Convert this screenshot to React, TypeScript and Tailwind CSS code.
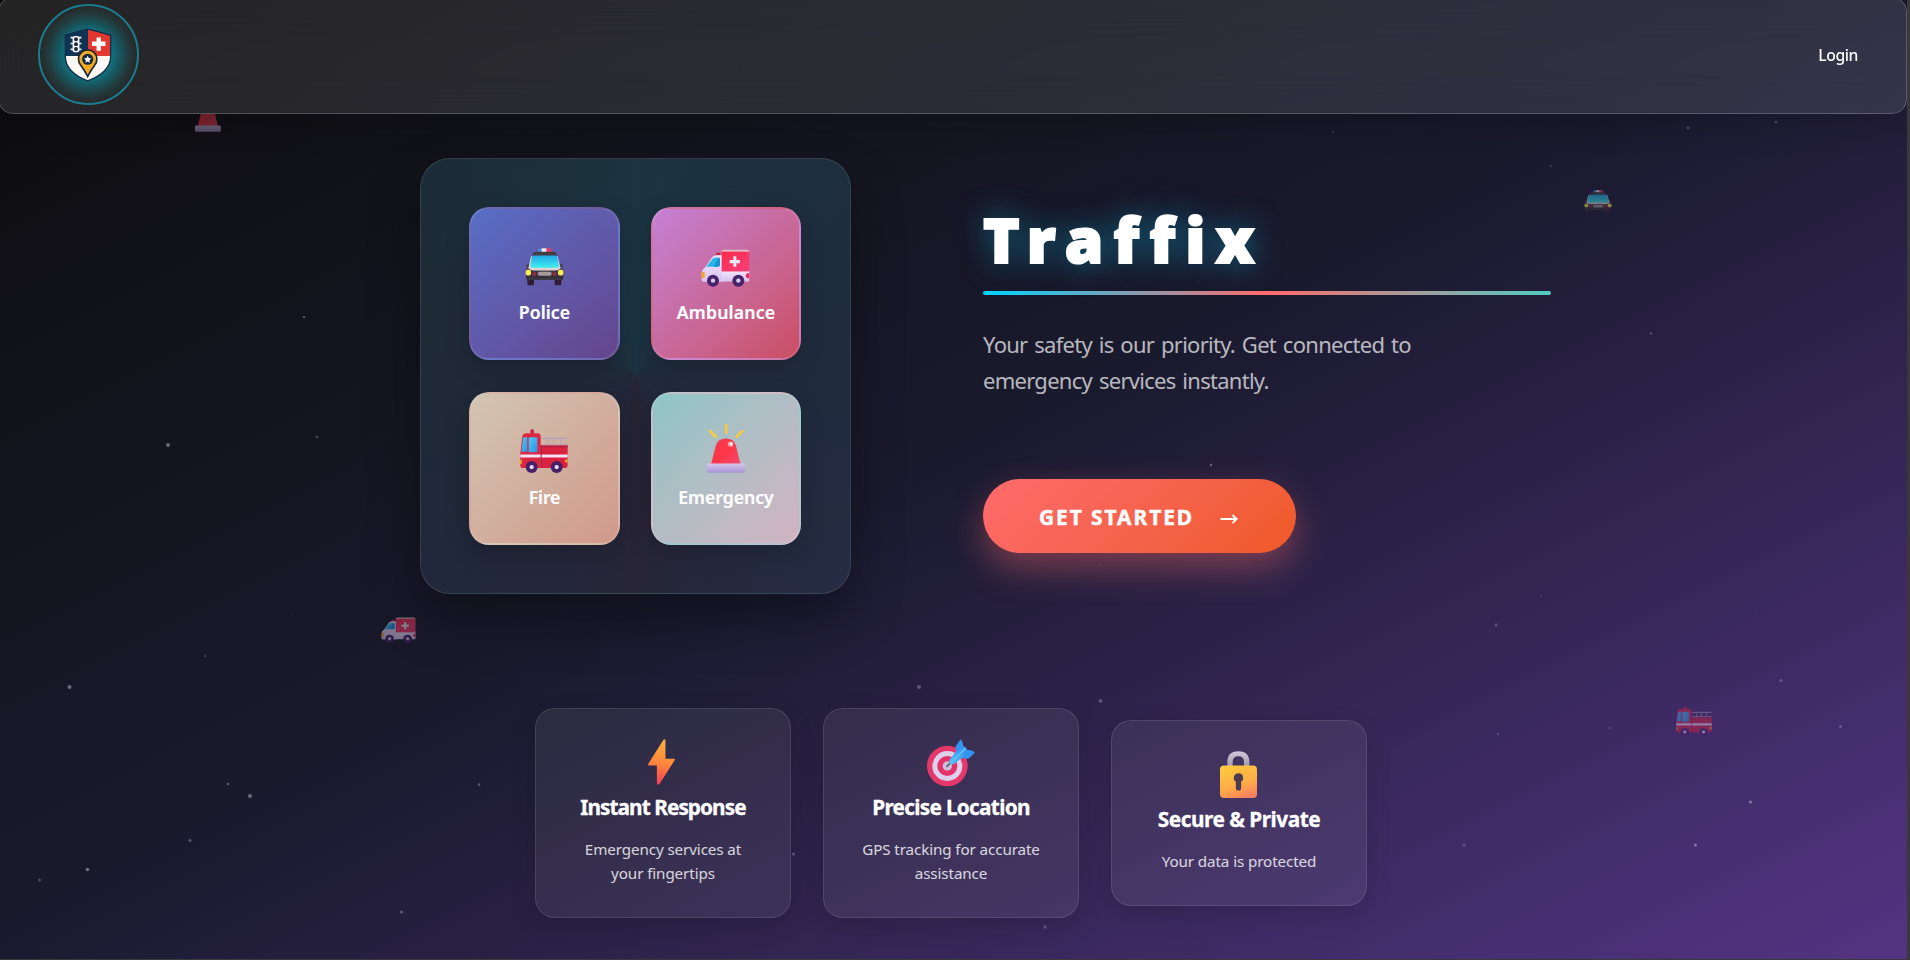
import React from "react";

type IconProps = { className?: string };

function PoliceCar({ className }: IconProps) {
  return (
    <svg viewBox="345 310 117 115" className={className} preserveAspectRatio="none">
      <defs>
        <linearGradient id="pc-glass" x1="0" y1="0" x2="0" y2="1">
          <stop offset="0" stopColor="#22a9e8" />
          <stop offset="1" stopColor="#3ff0ee" />
        </linearGradient>
        <linearGradient id="pc-body" x1="0" y1="0" x2="0" y2="1">
          <stop offset="0" stopColor="#4a4247" />
          <stop offset="1" stopColor="#2d2a33" />
        </linearGradient>
      </defs>
      <rect x="384" y="312" width="20" height="11" rx="4" fill="#4b8fd6" />
      <rect x="406" y="311" width="18" height="12" rx="4" fill="#f23a6a" />
      <rect x="395" y="311" width="14" height="12" fill="#f1eef4" />
      <path d="M368 328q2-7 10-7h52q8 0 10 7l2 8h-76z" fill="#433c43" />
      <rect x="352" y="398" width="20" height="25" rx="5" fill="#311c33" />
      <rect x="434" y="398" width="20" height="25" rx="5" fill="#311c33" />
      <path d="M350 360l10-3 3 12h-14zM458 360l-10-3-3 12h14z" fill="#4a4247" />
      <path d="M348 374q3-7 12-6l86-0q11 0 14 6v27q0 6-7 6h-98q-7 0-7-6z" fill="url(#pc-body)" />
      <path d="M363 335h80l9 36q-5 7-17 7h-63q-12 0-17-7z" fill="#ddd3d2" />
      <path d="M366 335q2-2 5-2h66q3 0 5 2l5 28q0 7-6 7h-74q-6 0-6-7z" fill="url(#pc-glass)" />
      <rect x="383" y="382" width="42" height="12" rx="6" fill="#a49a9c" />
      <circle cx="373" cy="389" r="6" fill="#9b2450" />
      <circle cx="434" cy="389" r="6" fill="#9b2450" />
      <rect x="347" y="376" width="16" height="17" rx="6" fill="#f7ee57" />
      <rect x="444" y="376" width="16" height="17" rx="6" fill="#f7ee57" />
      <rect x="352" y="402" width="102" height="3" rx="1.500" fill="#4c4552" />
    </svg>
  );
}

function AmbulanceIcon({ className }: IconProps) {
  return (
    <svg viewBox="874 312 147 115" className={className} preserveAspectRatio="none">
      <defs>
        <linearGradient id="am-body" x1="0" y1="0" x2="0" y2="1">
          <stop offset="0" stopColor="#f3e9fb" />
          <stop offset="1" stopColor="#d9c2f2" />
        </linearGradient>
        <linearGradient id="am-box" x1="0" y1="0" x2="1" y2="1">
          <stop offset="0" stopColor="#ff2b4b" />
          <stop offset="1" stopColor="#f5407a" />
        </linearGradient>
      </defs>
      <path d="M936 318q2-4 8-4h67q7 0 8 6v4h-83z" fill="#ddbfc4" />
      <rect x="919" y="323" width="13" height="9" rx="4" fill="#c22a4b" />
      <path d="M937 331h-17q-9 1-14 8l-19 28q-11 6-11 20v18q0 6 6 6h57z" fill="url(#am-body)" />
      <rect x="935" y="375" width="84" height="35" rx="3" fill="url(#am-body)" />
      <rect x="936" y="320" width="83" height="60" fill="url(#am-box)" />
      <path d="M890 366l18-24q4-4 10-4h9q4 0 4 4v17q0 6-6 7z" fill="#29b6ea" />
      <path d="M912 366l13-27 6 3v17q0 6-6 7z" fill="#1793d8" />
      <rect x="876" y="381" width="9" height="19" rx="4" fill="#f6a51c" />
      <path d="M1019 385q-11 0-11 8t11 8z" fill="#ee2a5a" />
      <path d="M971 334h9v11h11v10h-11v11h-9v-11h-11v-10h11z" fill="#f3e6ef" />
      <circle cx="910" cy="408" r="18" fill="#46236a" />
      <circle cx="986" cy="408" r="18" fill="#46236a" />
      <circle cx="910" cy="408" r="6.500" fill="#d9d0ee" />
      <circle cx="986" cy="408" r="6.500" fill="#d9d0ee" />
    </svg>
  );
}

function FireTruck({ className }: IconProps) {
  return (
    <svg viewBox="331 176 144 133" className={className} preserveAspectRatio="none">
      <defs>
        <linearGradient id="ft-glass" x1="0" y1="0" x2="1" y2="1">
          <stop offset="0" stopColor="#52c8f5" />
          <stop offset="1" stopColor="#2a94e8" />
        </linearGradient>
      </defs>
      <rect x="362" y="177" width="11" height="14" rx="5" fill="#cf1f55" />
      <g stroke="#b3a3bd" strokeWidth="4" fill="none">
        <path d="M393 204h81M393 224h81" />
        <path d="M414 204v20M433 204v20M453 204v20" strokeWidth="3" />
      </g>
      <path d="M350 189h34q9 0 9 10v95h-54q-7 0-7-8v-36l5-46q1-15 13-15z" fill="#dc2742" />
      <path d="M393 226h81v58q0 10-8 10h-73z" fill="#d92340" />
      <path d="M393 226h81v6h-81z" fill="#b92445" />
      <path d="M340 204q1-3 6-3h7v44h-18z" fill="url(#ft-glass)" />
      <rect x="357" y="201" width="26" height="45" rx="3" fill="url(#ft-glass)" />
      <path d="M332 253h142v9H332z" fill="#f3e3f6" />
      <path d="M393 226h3v68h-3z" fill="#a9173a" />
      <rect x="331" y="269" width="6" height="13" rx="3" fill="#f9a11e" />
      <path d="M474 267q-9 1-9 6t9 6z" fill="#f7a427" />
      <circle cx="366" cy="291" r="18" fill="#47206a" />
      <circle cx="441" cy="291" r="18" fill="#47206a" />
      <circle cx="366" cy="291" r="6.500" fill="#e6ddf2" />
      <circle cx="441" cy="291" r="6.500" fill="#e6ddf2" />
    </svg>
  );
}

function Siren({ className }: IconProps) {
  return (
    <svg viewBox="890 161 113 149" className={className} preserveAspectRatio="none">
      <defs>
        <linearGradient id="si-dome" x1="0" y1="0" x2="1" y2="1">
          <stop offset="0" stopColor="#ef3d50" />
          <stop offset="0.500" stopColor="#ff3548" />
          <stop offset="1" stopColor="#ee4c6c" />
        </linearGradient>
        <linearGradient id="si-base" x1="0" y1="0" x2="0" y2="1">
          <stop offset="0" stopColor="#d9c8ef" />
          <stop offset="1" stopColor="#a893d3" />
        </linearGradient>
      </defs>
      <g strokeWidth="8" strokeLinecap="round" stroke="#f8cc3e">
        <path d="M899 185l17 17M947 167v23M995 185l-17 17" />
      </g>
      <path d="M902 284l14-55q7-22 30-22t30 22l14 55z" fill="url(#si-dome)" />
      <circle cx="960" cy="224" r="8" fill="#ffa7ae" />
      <circle cx="962" cy="223" r="4" fill="#fff" />
      <rect x="890" y="282" width="112" height="27" rx="4" fill="url(#si-base)" />
    </svg>
  );
}

function Bolt({ className }: IconProps) {
  return (
    <svg viewBox="384 147 82 139" className={className} preserveAspectRatio="none">
      <defs>
        <linearGradient id="bolt" x1="0.500" y1="0" x2="0.400" y2="1">
          <stop offset="0" stopColor="#fbb13c" />
          <stop offset="0.500" stopColor="#ff8a3d" />
          <stop offset="1" stopColor="#f23c55" />
        </linearGradient>
      </defs>
      <path
        d="M431 149q6-3 6 3v55h26q4 0 2 4l-46 72q-8 5-8-2v-54h-25q-3-1-1-5z"
        fill="url(#bolt)"
      />
    </svg>
  );
}

function Target({ className }: IconProps) {
  return (
    <svg viewBox="351 145 144 144" className={className}>
      <defs>
        <linearGradient id="dart" x1="0" y1="1" x2="1" y2="0">
          <stop offset="0" stopColor="#55c3fb" />
          <stop offset="1" stopColor="#2f86e6" />
        </linearGradient>
      </defs>
      <circle cx="412" cy="226" r="61" fill="#e5386a" />
      <circle cx="412" cy="226" r="45" fill="#ddd0ea" />
      <circle cx="412" cy="226" r="30" fill="#e5316a" />
      <circle cx="412" cy="226" r="14" fill="#c9bfd8" />
      <path d="M411 227l20-20" stroke="#6b6480" strokeWidth="6" strokeLinecap="round" />
      <path d="M419 207l20-27 18-18 20 20-18 18-26 19q-19 8-14-12z" fill="url(#dart)" />
      <path d="M440 184q-6-14-1-20l12-17q6 0 8 14l0 8zM457 201q14 6 21 1l16-15q1-5-14-9l-9 1z" fill="#3393f0" />
      <path d="M428 211l38-38" stroke="#5cc4fb" strokeWidth="5" strokeLinecap="round" />
    </svg>
  );
}

function Padlock({ className }: IconProps) {
  return (
    <svg viewBox="360 152 111 142" className={className} preserveAspectRatio="none">
      <defs>
        <linearGradient id="lock" x1="0.300" y1="0" x2="0.700" y2="1">
          <stop offset="0" stopColor="#ffc83f" />
          <stop offset="0.600" stopColor="#ffab47" />
          <stop offset="1" stopColor="#f6805f" />
        </linearGradient>
        <linearGradient id="shackle" x1="0" y1="0" x2="0" y2="1">
          <stop offset="0" stopColor="#cfc9d8" />
          <stop offset="1" stopColor="#9f98ae" />
        </linearGradient>
      </defs>
      <path d="M382 200v-14q0-33 33-33t33 33v14h-16v-14q0-18-17-18t-17 18v14z" fill="url(#shackle)" />
      <rect x="360" y="196" width="111" height="98" rx="12" fill="url(#lock)" />
      <path d="M415.500 219a14 14 0 0 1 8 25.500v19a8 8 0 0 1-16 0v-19a14 14 0 0 1 8-25.500z" fill="#4b3a52" />
    </svg>
  );
}

function Shield({ className }: IconProps) {
  return (
    <svg viewBox="190 86 146 164" className={className}>
      <defs>
        <clipPath id="shield-clip">
          <path d="M262 90Q297 97 331 108v64q0 48-69 75-67-27-67-75v-64Q228 97 262 90z" />
        </clipPath>
      </defs>
      <g clipPath="url(#shield-clip)">
        <rect x="190" y="86" width="73" height="86" fill="#0f3354" />
        <rect x="263" y="86" width="73" height="86" fill="#e2382f" />
        <rect x="190" y="171" width="146" height="80" fill="#fbf8f4" />
      </g>
      <path
        d="M262 89Q297 96 332 108v64q0 48-70 75-68-27-68-75v-64Q228 96 262 89z"
        fill="none"
        stroke="#122c48"
        strokeWidth="4"
      />
      <path d="M289 115h13v12h14v14h-14v14h-13v-14h-14v-14h14z" fill="#fff" />
      <path d="M210 115h33M210 133h33M210 151h33" stroke="#f2f4f6" strokeWidth="5" />
      <rect x="216" y="110" width="21" height="50" rx="8" fill="#f2f4f6" />
      <circle cx="226.500" cy="120" r="6" fill="#1b2836" />
      <circle cx="226.500" cy="135" r="6" fill="#1b2836" />
      <circle cx="226.500" cy="150" r="6" fill="#1b2836" />
      <path
        d="M262 233q-9-18-21-34a28 28 0 1 1 42 0q-12 16-21 34z"
        fill="#f5aa24"
        stroke="#17263a"
        strokeWidth="5"
      />
      <circle cx="262" cy="181" r="17" fill="#13283f" />
      <path d="M262 170l3.400 7.500 8.200.8-6.200 5.400 1.900 8.100-7.300-4.300-7.300 4.300 1.900-8.100-6.200-5.400 8.200-.8z" fill="#fff" />
    </svg>
  );
}

const stars: [number, number, number, number][] = [
  [168, 445, 2, 0.42], [304, 317, 1, 0.45], [317, 437, 1.3, 0.25], [69.500, 687, 2, 0.42],
  [250, 796, 2, 0.42], [228, 784, 1.3, 0.32], [190, 840.500, 1.5, 0.32], [205, 656, 1.2, 0.2],
  [87.500, 869.500, 1.7, 0.45], [39.500, 880, 1.5, 0.25], [479, 784.500, 1.2, 0.32], [401.500, 912, 1.6, 0.3],
  [292, 614, 1, 0.08], [919, 687, 2, 0.28], [1100.500, 701, 2, 0.25], [1045, 927, 1.7, 0.25],
  [793.500, 854, 1.5, 0.3], [1211, 465, 1.2, 0.35], [1100, 565, 1, 0.12], [1496, 625, 1.4, 0.25],
  [1541, 596, 1.2, 0.1], [1498, 734, 1.3, 0.16], [1610, 728, 1.3, 0.16], [1781, 680.500, 1.6, 0.25],
  [1840.500, 726.500, 1.6, 0.25], [1757, 616, 1, 0.1], [1750.500, 802, 1.5, 0.45], [1695.500, 845, 1.5, 0.4],
  [1464, 845, 1.5, 0.25], [1651, 333.500, 1.2, 0.25], [1688, 128, 1.7, 0.2], [1776, 122, 1.6, 0.2],
  [1551, 166, 1.4, 0.12], [1333, 132, 1.2, 0.15],
];

const services = [
  {
    label: "Police",
    icon: <PoliceCar className="mb-[2px] h-[38px] w-[39px]" />,
    tone: "from-[#667eeacc] to-[#764ba2cc]",
    text: "tracking-[0.1px]",
  },
  {
    label: "Ambulance",
    icon: <AmbulanceIcon className="mr-px mb-px h-[38px] w-[49px]" />,
    tone: "from-[#f093fbcc] to-[#f5576ccc]",
    text: "tracking-[0.2px]",
  },
  {
    label: "Fire",
    icon: <FireTruck className="mr-px h-[44px] w-[48px]" />,
    tone: "from-[#ffecd2cc] to-[#fcb69fcc]",
    text: "tracking-[-0.1px]",
  },
  {
    label: "Emergency",
    icon: <Siren className="mr-px h-[50px] w-[38px]" />,
    tone: "from-[#a8edeacc] to-[#fed6e3cc]",
    text: "tracking-[0px]",
  },
];

const features = [
  {
    title: "Instant Response",
    tracking: "tracking-[-0.95px]",
    lines: ["Emergency services at", "your fingertips"],
    icon: <Bolt className="mr-[3px] h-[46px] w-[27px]" />,
  },
  {
    title: "Precise Location",
    tracking: "tracking-[-0.72px]",
    lines: ["GPS tracking for accurate", "assistance"],
    icon: <Target className="mt-px h-[48px] w-[48px]" />,
  },
  {
    title: "Secure & Private",
    tracking: "tracking-[-0.48px]",
    lines: ["Your data is protected"],
    icon: <Padlock className="mr-[2px] h-[47px] w-[37px]" />,
  },
];

function Backdrop() {
  return (
    <div className="pointer-events-none absolute inset-0">
      <svg className="absolute inset-0 h-full w-full">
        {stars.map(([x, y, r, o]) => (
          <circle key={`${x}-${y}`} cx={x} cy={y} r={r} fill="#e6dcf0" opacity={o} />
        ))}
      </svg>
      <Siren className="absolute top-[97px] left-[195px] h-[35px] w-[26px] opacity-45 [clip-path:inset(48%_0_0_0)]" />
      <PoliceCar className="absolute top-[190px] left-[1584px] h-[24px] w-[28px] opacity-50" />
      <AmbulanceIcon className="absolute top-[617px] left-[381px] h-[26px] w-[35px] opacity-50" />
      <FireTruck className="absolute top-[706px] left-[1676px] h-[30px] w-[36px] opacity-45" />
    </div>
  );
}

function Header() {
  return (
    <header className="relative z-10 -mt-[3px] -ml-[2px] flex h-[117px] w-[1909px] items-center justify-between rounded-[15px] border border-white/20 bg-white/10 pr-[48px] pl-[39px] shadow-[0_8px_32px_rgba(0,0,0,0.2)] backdrop-blur-[20px]">
      <div className="mb-[2px] flex h-[101px] w-[101px] items-center justify-center rounded-full border-[2.5px] border-[#1a7c8f] bg-[radial-gradient(circle_closest-side,#0c7f90_0%,#0f7684_45%,#18555d_65%,#23393b_84%,#27292a_100%)]">
        <Shield className="mr-[2px] h-[54px] w-[48px]" />
      </div>
      <a className="mb-[2px] text-[15.7px] leading-6 font-medium tracking-[-0.4px] text-white">Login</a>
    </header>
  );
}

function Hero() {
  return (
    <section className="relative mt-[44px] ml-[420px] flex items-start gap-[132px]">
      <div className="grid h-[436px] w-[431px] grid-cols-[151px_150px] grid-rows-2 gap-x-[31px] gap-y-[32px] rounded-[30px] border border-white/10 bg-[conic-gradient(from_0deg_at_50%_50%,rgba(38,96,112,0.42),rgba(44,74,94,0.42)_20%,rgba(50,66,88,0.42)_40%,rgba(56,58,78,0.42)_47%,rgba(62,54,70,0.42)_50%,rgba(56,58,78,0.42)_53%,rgba(46,64,84,0.42)_62%,rgba(46,74,86,0.42)_80%,rgba(38,96,112,0.42))] p-[48px] shadow-[0_25px_50px_rgba(0,0,0,0.35)]">
        {services.map((s) => (
          <div
            key={s.label}
            className={`flex flex-col items-center rounded-[20px] border-2 border-white/10 bg-linear-135 pt-[29px] shadow-[0_8px_24px_rgba(0,0,0,0.2)] ${s.tone}`}
          >
            <div className="flex h-[50px] items-end">{s.icon}</div>
            <span
              className={`mt-[12px] text-[17.6px] leading-6 font-semibold text-white [-webkit-text-stroke:0.2px_#ffffff] ${s.text}`}
            >
              {s.label}
            </span>
          </div>
        ))}
      </div>

      <div className="flex w-[568px] flex-col items-start pt-[49px]">
        <h1 className="text-[62px] leading-[64px] font-black tracking-[10.2px] text-white [-webkit-text-stroke:2px_#ffffff] [text-shadow:0_0_30px_rgba(0,212,255,0.5)]">
          Traffix
        </h1>
        <div className="mt-[20px] h-[4px] w-full rounded-[2px] bg-linear-to-r/srgb from-[#00d4ff] via-[#ff6b6b] to-[#4ecdc4]" />
        <p className="mt-[31px] text-[22px] leading-[36px] tracking-[-0.72px] text-white/70 [word-spacing:1.8px]">
          Your safety is our priority. Get connected to
          <br />
          emergency services instantly.
        </p>
        <button className="mt-[81px] flex h-[74px] w-[313px] items-center rounded-full bg-linear-135 from-[#ff6b6b] to-[#ee5a24] pl-[56px] text-white shadow-[0_15px_35px_rgba(255,107,107,0.4)]">
          <span className="mt-[2px] text-[20.8px] leading-7 font-bold tracking-[2px] [-webkit-text-stroke:0.5px_#ffffff]">
            GET STARTED
          </span>
          <svg viewBox="0 0 18 10" className="mt-[5px] ml-[26px] h-[10px] w-[18px]" fill="none">
            <path d="M0.500 5h16M12.500 1l4.200 4-4.200 4" stroke="#fff" strokeWidth="1.800" />
          </svg>
        </button>
      </div>
    </section>
  );
}

function Features() {
  return (
    <section className="relative mt-[114px] ml-[535px] flex items-center gap-[32px]">
      {features.map((f) => (
        <article
          key={f.title}
          className="flex w-[256px] flex-col items-center rounded-[20px] border border-white/10 bg-white/[0.065] pt-[29px] pb-[32px] text-center shadow-[0_8px_25px_rgba(0,0,0,0.15)]"
        >
          <div className="flex h-[48px] items-center">{f.icon}</div>
          <h3
            className={`mt-[7px] text-[20.8px] leading-7 font-bold text-white [-webkit-text-stroke:0.3px_#ffffff] ${f.tracking}`}
          >
            {f.title}
          </h3>
          <p className="mt-[16px] text-[15.2px] leading-6 tracking-[-0.1px] text-white/80">
            {f.lines.map((l) => (
              <span key={l} className="block">
                {l}
              </span>
            ))}
          </p>
        </article>
      ))}
    </section>
  );
}

export default function App() {
  return (
    <div className="h-[960px] w-[1910px] overflow-hidden bg-[#393939] pr-[3px] pb-px font-['Noto_Sans','Open_Sans',sans-serif]">
      <div className="relative flex h-full w-full flex-col overflow-hidden bg-[linear-gradient(to_bottom_right,#0c0c0c_0%,#1a1a2e_49%,#533483_100%)]">
        <Backdrop />
        <Header />
        <Hero />
        <Features />
      </div>
    </div>
  );
}
